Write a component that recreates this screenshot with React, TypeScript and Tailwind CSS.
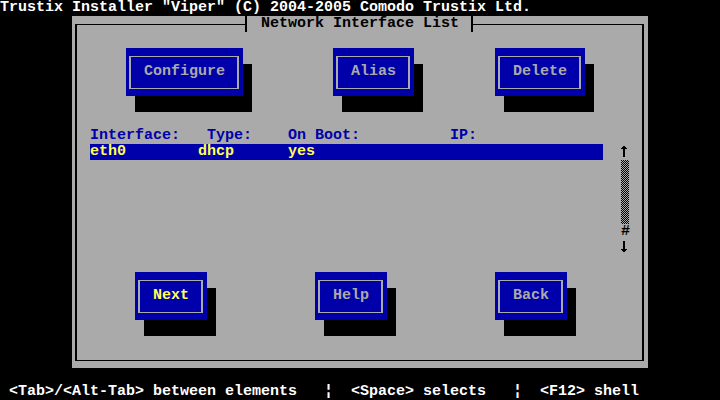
import React from "react";

type ButtonProps = {
  label: string;
  width: string;
  active?: boolean;
};

// newt-style push button: blue box, single-line inner frame, hard black shadow
function TextButton({ label, width, active = false }: ButtonProps) {
  return (
    <div
      className={`${width} h-12 shrink-0 bg-[#0000aa] pt-2 pb-[7px] pl-[3px] pr-[4px] shadow-[9px_16px_0_0_#000]`}
    >
      <div className="h-full border-x-2 border-y border-[#aaaaaa] pl-[13px] pt-[7px]">
        <span
          className={`block h-4 whitespace-pre ${active ? "text-[#ffff55]" : "text-[#aaaaaa]"}`}
        >
          {label}
        </span>
      </div>
    </div>
  );
}

function ArrowUp() {
  return (
    <svg width="9" height="16" shapeRendering="crispEdges" fill="#000">
      <rect x="2" y="2" width="2" height="11" />
      <rect x="1" y="3" width="4" height="1" />
      <rect x="0" y="4" width="2" height="1" />
      <rect x="4" y="4" width="2" height="1" />
    </svg>
  );
}

function ArrowDown() {
  return (
    <svg width="9" height="16" shapeRendering="crispEdges" fill="#000">
      <rect x="2" y="1" width="2" height="11" />
      <rect x="1" y="10" width="4" height="1" />
      <rect x="0" y="9" width="2" height="1" />
      <rect x="4" y="9" width="2" height="1" />
    </svg>
  );
}

function ScrollBar() {
  return (
    <div className="ml-[18px] flex w-[9px] flex-col text-black">
      <ArrowUp />
      <svg width="8" height="64" shapeRendering="crispEdges">
        <defs>
          <pattern id="shade" width="2" height="2" patternUnits="userSpaceOnUse">
            <rect width="2" height="2" fill="#aaaaaa" />
            <rect width="1" height="1" fill="#000" />
            <rect x="1" y="1" width="1" height="1" fill="#000" />
          </pattern>
        </defs>
        <rect width="8" height="64" fill="url(#shade)" />
      </svg>
      <div className="h-4">#</div>
      <ArrowDown />
    </div>
  );
}

export default function App() {
  return (
    <div className="flex h-[400px] w-[720px] flex-col overflow-hidden bg-black font-['Liberation_Mono','DejaVu_Sans_Mono',monospace] text-[15px] leading-4 font-bold">
      {/* Title line */}
      <div className="h-4 whitespace-pre text-white">
        Trustix Installer "Viper" (C) 2004-2005 Comodo Trustix Ltd.
      </div>

      {/* Window */}
      <div className="ml-[72px] flex h-[352px] w-[576px] bg-[#aaaaaa] pt-2 pb-[7px] pl-[3px] pr-[4px]">
        <div className="relative flex flex-1 flex-col border-x-2 border-y border-black">
          {/* Window title sits on the top border */}
          <div className="absolute -top-[9px] left-[168px] h-4 border-x-2 border-black bg-[#aaaaaa] pl-[14px] pr-[12px] whitespace-pre text-black">
            Network Interface List
          </div>

          {/* Action buttons */}
          <div className="mt-[23px] ml-[49px] flex">
            <TextButton label="Configure" width="w-[117px]" />
            <div className="ml-[90px]">
              <TextButton label="Alias" width="w-[81px]" />
            </div>
            <div className="ml-[81px]">
              <TextButton label="Delete" width="w-[90px]" />
            </div>
          </div>

          {/* Interface list */}
          <div className="mt-8 ml-[13px]">
            <div className="h-4 whitespace-pre text-[#0000aa]">
              {"Interface:   Type:    On Boot:          IP:"}
            </div>
            <div className="flex">
              <div className="w-[513px]">
                <div className="h-4 whitespace-pre bg-[#0000aa] text-[#ffff55]">
                  {"eth0        dhcp      yes"}
                </div>
              </div>
              <ScrollBar />
            </div>
          </div>

          {/* Navigation buttons */}
          <div className="mt-4 ml-[58px] flex">
            <TextButton label="Next" width="w-[72px]" active />
            <div className="ml-[108px]">
              <TextButton label="Help" width="w-[72px]" />
            </div>
            <div className="ml-[108px]">
              <TextButton label="Back" width="w-[72px]" />
            </div>
          </div>
        </div>
      </div>

      {/* Help line */}
      <div className="mt-auto h-4 whitespace-pre text-white">
        {" <Tab>/<Alt-Tab> between elements   ¦  <Space> selects   ¦  <F12> shell"}
      </div>
    </div>
  );
}
